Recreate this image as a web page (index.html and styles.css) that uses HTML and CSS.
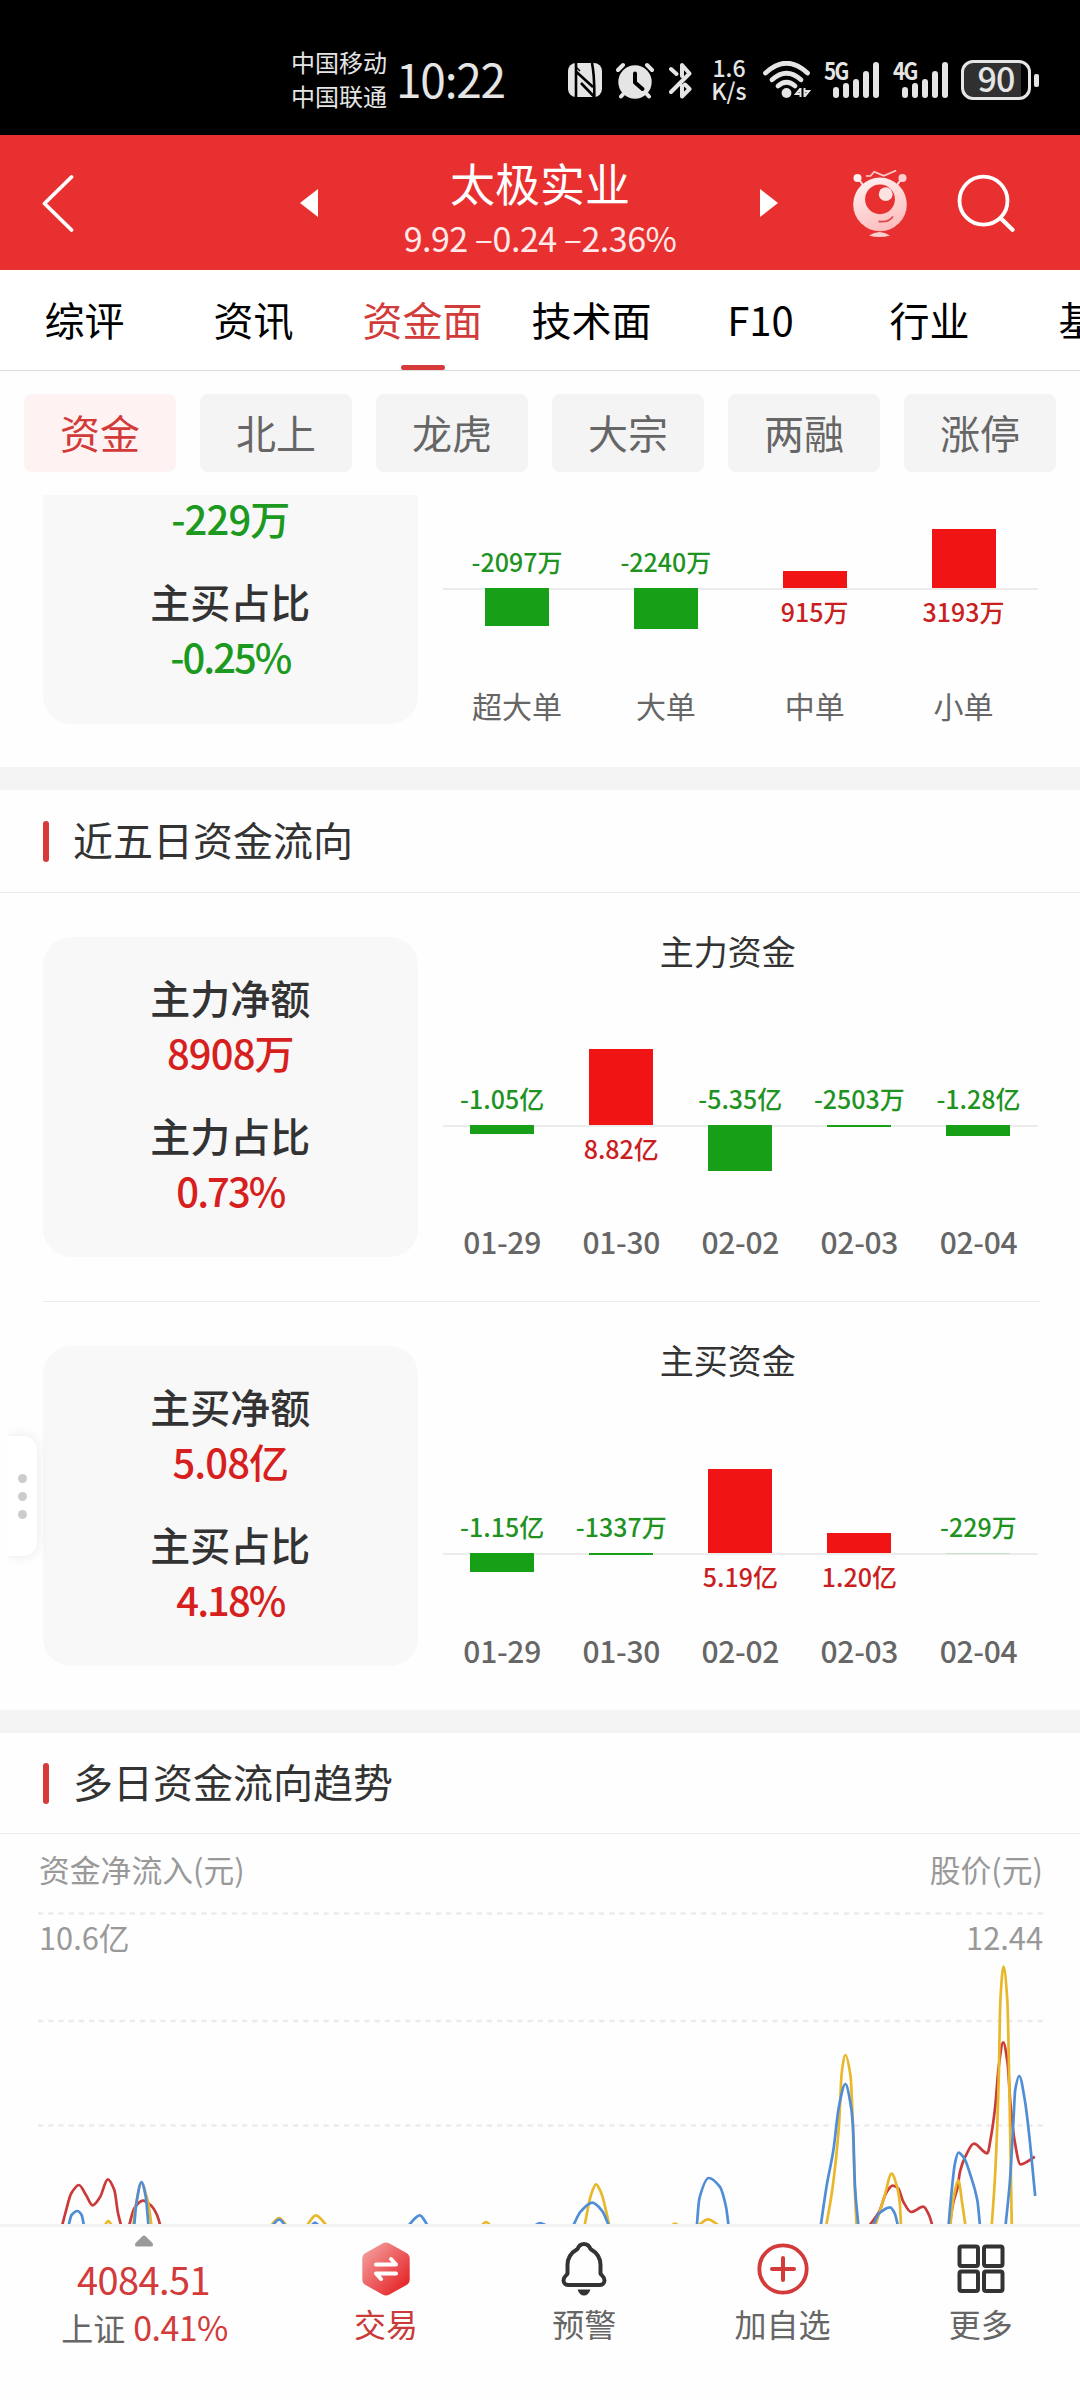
FILE: index.html
```html
<!DOCTYPE html>
<html lang="zh-CN">
<head>
<meta charset="utf-8">
<title>太极实业 - 资金面</title>
<link rel="stylesheet" href="styles.css">
</head>
<body>
<div class="screen">

  <div class="status">
    <div class="carriers"><span>中国移动</span><span>中国联通</span></div>
    <div class="clock">10:22</div>
    <svg class="st-nfc" width="34" height="34" viewBox="0 0 34 34">
      <rect width="34" height="34" rx="8" fill="#e5e5e5"/>
      <path d="M8 0 V34 M8.500 9 L25 24 M13 20 L25.500 33 M24 0 Q26.500 12 26.300 34" stroke="#000" stroke-width="2.600" fill="none"/>
      <path d="M8 0 V4 L12 8" stroke="#000" stroke-width="1.500" fill="none"/>
    </svg>
    <svg class="st-alarm" width="38" height="37" viewBox="0 0 38 37">
      <circle cx="19" cy="20" r="16.7" fill="#e5e5e5"/>
      <path d="M2 8 L7 3 M36 8 L31 3 M5 34.5 L9 30 M33 34.5 L29 30" stroke="#e5e5e5" stroke-width="4" stroke-linecap="round"/>
      <path d="M19 11.5 V20.5 L26.5 27" stroke="#000" stroke-width="4" fill="none" stroke-linecap="round" stroke-linejoin="round"/>
    </svg>
    <svg class="st-bt" width="23" height="37" viewBox="0 0 23 37">
      <path d="M2 7 L7.5 12 M2 30 L20.5 11.5 L13 3 V14 M13 24 V34.5 L20.5 27 L16 22.5" stroke="#e5e5e5" stroke-width="4" fill="none" stroke-linecap="round" stroke-linejoin="round"/>
    </svg>
    <div class="st-speed"><span>1.6</span><span>K/s</span></div>
    <svg class="st-wifi" width="48" height="38" viewBox="0 0 48 38">
      <g stroke="#e5e5e5" stroke-width="4.800" fill="none" stroke-linecap="round">
        <path d="M2.500 12 Q23.500 -7.500 44.500 12"/><path d="M9 18.800 Q23.500 5.500 38 18.800"/><path d="M15 25 Q23.500 17.500 32 25"/>
      </g>
      <circle cx="23.500" cy="32" r="4.900" fill="#e5e5e5"/>
      <path d="M37.500 27 V36 M41.500 27 V36 M37.500 27.500 L33 33 H37.500 M41.500 35.500 L46 30 H41.500" stroke="#e5e5e5" stroke-width="2" fill="none"/>
    </svg>
    <div class="signal">
      <span class="net">5G</span>
      <i class="s1"></i><i class="s2"></i><i class="s3"></i><i class="s4"></i><i class="s5"></i>
    </div>
    <div class="signal signal-2">
      <span class="net">4G</span>
      <i class="s1"></i><i class="s2"></i><i class="s3"></i><i class="s4"></i><i class="s5"></i>
    </div>
    <div class="battery"><span>90</span></div><i class="battery-tip"></i>
  </div>

  <header class="topbar">
    <svg class="back" width="32" height="58" viewBox="0 0 32 58"><path d="M29.500 3 L2.500 29.500 L29.500 56" stroke="#fff" stroke-width="3.800" fill="none" stroke-linecap="round" stroke-linejoin="round"/></svg>
    <svg width="18" height="28" viewBox="0 0 18 28"><path d="M0 14 L18 0 V28Z" fill="#fff"/></svg>
    <div class="stock">
      <h1>太极实业</h1>
      <p>9.92 –0.24 –2.36%</p>
    </div>
    <svg width="18" height="28" viewBox="0 0 18 28"><path d="M18 14 L0 0 V28Z" fill="#fff"/></svg>
    <div class="actions">
      <svg width="56" height="70" viewBox="851.500 167 56 70">
        <defs><linearGradient id="face" x1="0" y1="0" x2=".4" y2="1"><stop offset="0" stop-color="#fff4f4"/><stop offset="1" stop-color="#fdc0c0"/></linearGradient></defs>
        <path d="M857 176.500 L864 186 M902 176.500 L895 186" stroke="#fde0e0" stroke-width="2"/>
        <circle cx="857" cy="177" r="4" fill="#fff0f0"/><circle cx="902" cy="177" r="4" fill="#fbd0d0"/>
        <path d="M865.400 175 H870 L873.700 170.700 L883.300 174.800 L895.700 169.500" stroke="#fbd0d0" stroke-width="1.600" fill="none"/>
        <circle cx="879.500" cy="203.400" r="26.800" fill="url(#face)"/>
        <circle cx="879.500" cy="198.300" r="14.900" fill="#e83030"/>
        <circle cx="885.200" cy="193.200" r="6.900" fill="#fde2e2"/>
        <path d="M878 220.300 Q888 222 892.500 215.500" stroke="#e04848" stroke-width="1.800" fill="none"/>
        <path d="M868.500 234.500 Q879 227.500 889.500 234.500 Q879 237.500 868.500 234.500Z" fill="#fbd0d0"/>
      </svg>
      <svg width="58" height="60" viewBox="957 172 58 60"><circle cx="983.500" cy="199.700" r="24" stroke="#fff" stroke-width="3.800" fill="none"/><path d="M1001 217.500 L1012.500 228.700" stroke="#fff" stroke-width="4.200" stroke-linecap="round"/></svg>
    </div>
  </header>

  <nav class="tabs">
    <a>综评</a><a>资讯</a><a class="on">资金面</a><a>技术面</a><a>F10</a><a>行业</a><a>基金</a>
  </nav>

  <div class="chips">
    <a class="on">资金</a><a>北上</a><a>龙虎</a><a>大宗</a><a>两融</a><a>涨停</a>
  </div>

  <main class="scroller">
    <section class="flow flow-cut">
      <div class="card">
        <dl><dd class="down">-229万</dd></dl>
        <dl><dt>主买占比</dt><dd class="down pct">-0.25%</dd></dl>
      </div>
      <div class="chart chart-orders">
        <div class="plot">
          <div class="neg"><b>-2097万</b><i style="height:38px"></i></div>
          <div class="neg"><b>-2240万</b><i style="height:41px"></i></div>
          <div class="pos"><i style="height:17px"></i><b>915万</b></div>
          <div class="pos"><i style="height:59px"></i><b>3193万</b></div>
        </div>
        <div class="axis"><span>超大单</span><span>大单</span><span>中单</span><span>小单</span></div>
      </div>
    </section>

    <div class="band"></div>
    <h2 class="section-title first-title">近五日资金流向</h2>

    <section class="flow">
      <div class="card">
        <dl><dt>主力净额</dt><dd class="up">8908万</dd></dl>
        <dl><dt>主力占比</dt><dd class="up pct">0.73%</dd></dl>
      </div>
      <div class="chart chart-main">
        <h3>主力资金</h3>
        <div class="plot">
          <div class="neg"><b>-1.05亿</b><i style="height:9px"></i></div>
          <div class="pos"><i style="height:76px"></i><b>8.82亿</b></div>
          <div class="neg"><b>-5.35亿</b><i style="height:46px"></i></div>
          <div class="neg"><b>-2503万</b><i style="height:2px"></i></div>
          <div class="neg"><b>-1.28亿</b><i style="height:11px"></i></div>
        </div>
        <div class="axis dates"><span>01-29</span><span>01-30</span><span>02-02</span><span>02-03</span><span>02-04</span></div>
      </div>
    </section>
    <hr class="rule">
    <section class="flow">
      <div class="card">
        <dl><dt>主买净额</dt><dd class="up">5.08亿</dd></dl>
        <dl><dt>主买占比</dt><dd class="up pct">4.18%</dd></dl>
      </div>
      <div class="chart chart-buy">
        <h3>主买资金</h3>
        <div class="plot">
          <div class="neg"><b>-1.15亿</b><i style="height:19px"></i></div>
          <div class="neg"><b>-1337万</b><i style="height:2px"></i></div>
          <div class="pos"><i style="height:84px"></i><b>5.19亿</b></div>
          <div class="pos"><i style="height:20px"></i><b>1.20亿</b></div>
          <div class="neg"><b>-229万</b><i class="faint" style="height:1px"></i></div>
        </div>
        <div class="axis dates"><span>01-29</span><span>01-30</span><span>02-02</span><span>02-03</span><span>02-04</span></div>
      </div>
    </section>

    <div class="band"></div>
    <h2 class="section-title">多日资金流向趋势</h2>

    <section class="trend">
      <div class="trend-row"><span>资金净流入(元)</span><span>股价(元)</span></div>
      <div class="trend-plot">
        <svg id="trend" width="1080" height="314" viewBox="0 1910 1080 314">
          <path d="M38 1913.500 H1043 M38 2021 H1043 M38 2125.500 H1043" stroke="#ebebeb" stroke-width="2.400" stroke-dasharray="5.200 5"/>
        </svg>
        <div class="trend-row trend-values"><span>10.6亿</span><span>12.44</span></div>
      </div>
    </section>
    <div class="handle-clip"><div class="handle"><i></i><i></i><i></i></div></div>
  </main>

  <footer class="bottombar">
    <div class="index">
      <svg width="20" height="12" viewBox="0 0 20 12"><path d="M8.500 1.200 Q10 0 11.500 1.200 L18.500 8 Q20 11.500 17 11.500 H3 Q0 11.500 1.500 8Z" fill="#999"/></svg>
      <strong>4084.51</strong>
      <p>上证<em>0.41%</em></p>
    </div>
    <a class="nav-item hot">
      <svg width="54" height="54" viewBox="-27 -27 54 54">
        <defs><linearGradient id="hex" x1="0" y1="0" x2="1" y2="1"><stop offset=".1" stop-color="#f49a9a"/><stop offset=".85" stop-color="#e62a2d"/></linearGradient></defs>
        <path d="M-3.500 -25.500 Q0 -27.500 3.500 -25.500 L20.500 -16 Q23.700 -14 23.700 -10.500 V10.500 Q23.700 14 20.500 16 L3.500 25.500 Q0 27.500 -3.500 25.500 L-20.500 16 Q-23.700 14 -23.700 10.500 V-10.500 Q-23.700 -14 -20.500 -16Z" fill="url(#hex)"/>
        <path d="M-10 -4.500 H10 L5 -10 M10 4.500 H-10 L-5 10" stroke="#fff" stroke-width="4" fill="none" stroke-linecap="round" stroke-linejoin="round"/>
      </svg>
      <span>交易</span>
    </a>
    <a class="nav-item">
      <svg width="54" height="54" viewBox="-27 -27 54 54">
        <path d="M0 -25 C-4 -25 -5.500 -22.500 -6.500 -20 C-13.500 -16 -16.500 -10 -16.500 -4 V4.500 C-17 6.500 -20.500 7 -20.500 11.500 C-20.500 14.500 -18 16 -15.500 16 H15.500 C18 16 20.500 14.500 20.500 11.500 C20.500 7 17 6.500 16.500 4.500 V-4 C16.500 -10 13.500 -16 6.500 -20 C5.500 -22.500 4 -25 0 -25Z" stroke="#333" stroke-width="4" fill="none" stroke-linejoin="round"/>
        <path d="M-6.500 20.500 H6.500 Q4.500 26.500 0 26.500 Q-4.500 26.500 -6.500 20.500Z" fill="#333"/>
      </svg>
      <span>预警</span>
    </a>
    <a class="nav-item">
      <svg width="54" height="54" viewBox="-27 -27 54 54"><circle r="23.700" stroke="#d33a3a" stroke-width="3.800" fill="none"/><path d="M-11 0 H11 M0 -11 V11" stroke="#d33a3a" stroke-width="4" stroke-linecap="round"/></svg>
      <span>加自选</span>
    </a>
    <a class="nav-item">
      <svg width="54" height="54" viewBox="-27 -27 54 54"><g stroke="#333" stroke-width="4" fill="none"><rect x="-21.500" y="-22.500" width="18.500" height="19.500" rx="2"/><rect x="3" y="-22.500" width="18.500" height="19.500" rx="2"/><rect x="-21.500" y="2.500" width="18.500" height="19.500" rx="2"/><rect x="3" y="2.500" width="18.500" height="19.500" rx="2"/></g></svg>
      <span>更多</span>
    </a>
  </footer>
</div>
<script src="trend.js"></script>
</body>
</html>
```
FILE: styles.css
```css
* { box-sizing: border-box; margin: 0; padding: 0; }
body {
  width: 1080px;
  height: 2400px;
  overflow: hidden;
  background: #fefefe;
  font-family: "Noto Sans CJK SC", sans-serif;
  font-weight: 400;
  color: #333;
}
i, em { font-style: normal; }
svg { display: block; flex: none; }
.screen { display: flex; flex-direction: column; height: 2400px; overflow: hidden; }

/* status bar */
.status {
  flex: none;
  display: flex;
  align-items: center;
  height: 135px;
  padding: 25px 0 0 291px;
  background: #000;
  color: #e5e5e5;
}
.carriers { display: flex; flex-direction: column; width: 105px; font-size: 24px; line-height: 34px; white-space: nowrap; margin-top: -3px; }
.clock { width: 171px; font-size: 46px; line-height: 60px; letter-spacing: -1.200px; margin-top: -5px; white-space: nowrap; }
.st-nfc { margin: 0 14px 0 1px; }
.st-alarm { margin-right: 15px; }
.st-bt { margin-right: 19px; }
.st-speed { display: flex; flex-direction: column; align-items: center; width: 36px; margin: -2px 16px 0 0; font-size: 23px; line-height: 23px; font-weight: 500; }
.st-wifi { margin-right: 13px; }
.signal { position: relative; display: flex; align-items: flex-end; gap: 3.900px; width: 54px; height: 36px; padding-left: 9px; margin-right: 15px; flex: none; }
.signal .net { position: absolute; left: 0; top: -4px; font-size: 24px; line-height: 24px; font-weight: 700; letter-spacing: -2px; transform-origin: 0 0; transform: scaleX(.86); }
.signal i { width: 6px; border-radius: 3px; background: #e5e5e5; flex: none; }
.signal .s1 { height: 11px; } .signal .s2 { height: 15px; } .signal .s3 { height: 19px; } .signal .s4 { height: 27px; } .signal .s5 { height: 36px; }
.signal-2 { margin-right: 14px; }
.battery {
  flex: none;
  display: flex; align-items: center; justify-content: center;
  width: 70px; height: 40px;
  border: 3px solid #e5e5e5; border-radius: 12px;
  background: linear-gradient(90deg, #303030 57px, #000 57px);
  font-size: 34px; line-height: 34px; font-weight: 500; letter-spacing: -1px;
}
.battery span { margin-top: -4px; }
.battery-tip { width: 5px; height: 13px; margin-left: 3px; border-radius: 2px; background: #e5e5e5; }

/* header */
.topbar {
  flex: none;
  display: grid;
  grid-template-columns: 300px 18px 442px 18px 1fr;
  align-items: center;
  height: 135px;
  background: #e83030;
  color: #fff;
}
.back { margin-left: 42px; }
.stock { text-align: center; white-space: nowrap; padding: 14px 0 0 2px; }
.stock h1 { font-size: 45px; line-height: 56px; font-weight: 400; }
.stock p { font-size: 34px; line-height: 54px; letter-spacing: -.500px; color: #ffe9e9; }
.actions { display: flex; align-items: center; gap: 49px; padding-left: 74px; }

/* tabs */
.tabs { flex: none; display: flex; height: 101px; overflow: hidden; background: #fff; border-bottom: 1px solid #dcdcdc; }
.tabs a { flex: none; width: 169px; text-align: center; font-size: 40px; line-height: 98px; color: #000; white-space: nowrap; }
.tabs .on { color: #d33a3a; display: flex; flex-direction: column; align-items: center; }
.tabs .on::after { content: ""; width: 44px; height: 5px; margin-top: -3px; border-radius: 3px; background: #d63a3a; }

.chips { flex: none; display: flex; gap: 24px; height: 124px; padding: 23px 24px; }
.chips a { width: 152px; height: 78px; border-radius: 8px; background: #f4f4f4; color: #666; font-size: 40px; line-height: 76px; text-align: center; }
.chips .on { background: #fef3f2; color: #d33a3a; }

/* scrolling content */
.scroller { position: relative; flex: none; height: 1729px; overflow: hidden; }
.flow { display: flex; height: 408px; padding: 44px 42px 44px 43px; }
.card { width: 375px; height: 320px; padding-top: 33px; border-radius: 28px; background: #f8f8f8; text-align: center; }
.card dl { margin-bottom: 28px; font-size: 40px; line-height: 55px; font-weight: 500; }
.card dt { color: #333; }
.card dd { letter-spacing: -.900px; }
.card .pct { letter-spacing: -2px; }
.up { color: #d71f20; }
.down { color: #1c9a1f; }
.chart { display: flex; flex-direction: column; width: 621px; height: 320px; padding-left: 25px; }
.chart h3 { margin-left: -25px; text-align: center; font-size: 34px; line-height: 44px; height: 44px; margin-top: -8px; font-weight: 400; }
.plot { flex: none; display: grid; grid-auto-flow: column; grid-auto-columns: 1fr; height: var(--plot); }
.plot > div { display: flex; flex-direction: column; align-items: center; background: linear-gradient(#ececec, #ececec) 0 var(--base) / 100% 2px no-repeat; }
.plot i { display: block; flex: none; width: 64px; }
.plot b { font-size: 25px; line-height: 30px; font-weight: 500; white-space: nowrap; }
.neg b { color: #1f931f; margin-top: calc(var(--base) - 42px); }
.neg i { background: #17a017; margin-top: 12px; }
.neg .faint { background: #c4e2c4; }
.pos { padding-bottom: calc(var(--plot) - var(--base) - 38px); justify-content: flex-end; }
.pos b { color: #c9201f; margin-top: 8px; }
.pos i { background: #f01414; }
.chart-main { --plot: 232px; --base: 152px; }
.chart-buy { --plot: 232px; --base: 171px; }
.axis { display: grid; grid-auto-flow: column; grid-auto-columns: 1fr; text-align: center; font-size: 30px; line-height: 44px; color: #666; margin-top: 12px; }
.dates { font-weight: 500; letter-spacing: -.300px; margin-top: 14px; }

/* first block, its top already scrolled under the chips */
.flow-cut { height: 272px; padding-top: 0; }
.flow-cut .card { height: 229px; padding-top: 0; border-radius: 0 0 28px 28px; }
.flow-cut .card dl:first-child { margin-top: -4px; }
.flow-cut .chart { --plot: 176px; --base: 93px; height: 229px; }

.band { height: 23px; background: #f4f4f4; }
.section-title { display: flex; align-items: center; gap: 24px; height: 101px; padding: 0 0 5px 43px; border-bottom: 1px solid #ececec; font-size: 40px; line-height: 60px; font-weight: 400; color: #333; }
.section-title::before { content: ""; width: 6px; height: 41px; margin-top: 5px; border-radius: 3px; background: #d63a3a; }
.first-title { height: 103px; }
.rule { height: 1px; border: 0; margin: 0 40px 0 43px; background: #ececec; }

.trend-row { display: flex; justify-content: space-between; padding: 0 37px 0 39px; font-size: 30.800px; line-height: 44px; color: #999; }
.trend > .trend-row { height: 76px; padding-top: 13px; }
.trend-plot { display: grid; }
.trend-plot > * { grid-area: 1 / 1; }
.trend-values { align-self: start; padding-top: 5px; }

/* side handle floating over the page */
.handle-clip { position: absolute; left: 8px; top: 921px; width: 60px; height: 160px; overflow: hidden; }
.handle { display: flex; flex-direction: column; align-items: center; justify-content: center; gap: 9px; width: 29px; height: 120px; margin-top: 20px; border-radius: 0 14px 14px 0; background: #fff; box-shadow: 0 0 14px rgba(0,0,0,.09); }
.handle i { width: 9px; height: 9px; border-radius: 50%; background: #ccc; }

/* bottom bar */
.bottombar { flex: none; display: grid; grid-template-columns: 287px repeat(4, 198.250px); height: 176px; border-top: 3px solid #f3f3f3; background: #fefefe; }
.index { display: flex; flex-direction: column; align-items: center; padding-top: 8px; }
.index strong { font-size: 38px; line-height: 50px; font-weight: 400; color: #d33a3a; letter-spacing: -.600px; margin-top: 7px; }
.index p { display: flex; align-items: baseline; gap: 8px; font-size: 32px; line-height: 48px; color: #666; white-space: nowrap; margin-top: -1px; padding-left: 2px; }
.index em { font-size: 34px; letter-spacing: -.600px; color: #d33a3a; }
.nav-item { display: flex; flex-direction: column; align-items: center; padding-top: 15px; font-size: 32px; line-height: 46px; color: #666; }
.nav-item span { margin-top: 4px; }
.hot { color: #c93a38; }
```
FILE: trend.js
```js
// Curve segments of the three series, as x,y pairs in chart coordinates.
const series = [
  ["#c93a38", [
    [62,2226, 65.4,2213, 71.3,2193.3, 78.9,2185, 86,2195, 92.6,2205.3, 99.9,2197.3, 107.8,2179.3, 114.3,2190, 118,2213, 121.2,2226],
    [129,2226, 134.3,2208.3, 142.9,2200.7, 151.5,2206, 157,2215, 160.5,2226],
    [869,2226, 879.2,2211.7, 886,2193.3, 892.6,2185.7, 898.1,2188.3, 903.3,2201.7, 911.2,2212, 923.3,2206.7, 929,2215, 932.5,2226],
    [949.5,2226, 953.2,2203.3, 957.7,2186.7, 960,2171.7, 965.3,2156.7, 973.9,2143.7, 987.3,2153.3, 991,2136.7, 995.2,2106.7, 998.7,2066.7, 1003.2,2042.3, 1007.6,2063.3, 1010.4,2103.3, 1014.5,2140, 1020.4,2164.3, 1034.8,2156.7]
  ]],
  ["#e9b72a", [
    [104.5,2226, 108.3,2221, 112,2226],
    [133.2,2226, 136,2204, 141.3,2183, 147,2198, 149.5,2211, 151.5,2226],
    [270.5,2226, 279,2218, 287,2226],
    [306.5,2226, 315.8,2215.3, 327,2226],
    [481,2226, 486,2222, 491,2226],
    [584.5,2226, 591,2195, 596.1,2184.3, 601.3,2193.3, 609.5,2226],
    [671,2226, 675,2223.5, 679,2226],
    [697.5,2226, 708,2219.3, 719.5,2226],
    [826.2,2226, 832.7,2186.7, 838.9,2126.7, 841.7,2073.3, 845.4,2055, 850.6,2076.7, 852.7,2120, 854.7,2186.7, 856.6,2226],
    [875.2,2226, 884.4,2196.7, 891.6,2173.7, 897,2186.7, 899.8,2203.3, 901,2226],
    [950.3,2226, 953.2,2200, 958.4,2180.7, 962.2,2203.3, 965.5,2226],
    [991.7,2226, 995.2,2173.3, 998.7,2080, 1000.4,2000, 1003.5,1966.7, 1007.3,2000, 1009.7,2106.7, 1011.8,2226]
  ]],
  ["#4f8dd6", [
    [68.5,2226, 71.6,2215, 77.5,2211, 81.6,2215, 84,2226],
    [134.2,2226, 136.4,2203.3, 141.5,2182, 145.7,2196.7, 148.5,2226],
    [272,2226, 279.3,2219.5, 285.5,2226],
    [311,2226, 315,2222.5, 319,2226],
    [408,2226, 419.8,2215.3, 428,2226],
    [534,2226, 540,2223, 547,2226],
    [573,2226, 580.6,2211.7, 592.3,2202.7, 602,2210.7, 609,2226],
    [696.8,2226, 699.4,2198.3, 708.7,2178, 719.8,2186.7, 726,2206.7, 728.6,2226],
    [820.7,2226, 826.5,2186.7, 833.4,2150, 838.9,2106.7, 845.4,2084, 851,2106.7, 853,2126.7, 855,2186.7, 858.4,2226],
    [873,2226, 879.2,2213.3, 890.2,2207.3, 894.7,2213.3, 898,2226],
    [948.5,2226, 950.8,2200, 955,2163.3, 958.4,2152.7, 964.2,2158.3, 970.4,2175, 977.3,2200, 980,2226],
    [1005.5,2226, 1010,2180, 1013.5,2120, 1015.2,2090, 1019.3,2076, 1024.8,2100, 1029,2133.3, 1035.2,2196]
  ]]
];

// Monotone cubic interpolation: peaks stay flat and never overshoot.
function curve(flat) {
  const p = [];
  for (let i = 0; i < flat.length; i += 2) p.push([flat[i], flat[i + 1]]);
  const n = p.length;
  const s = p.slice(1).map((q, i) => (q[1] - p[i][1]) / (q[0] - p[i][0]));
  const t = p.map((q, i) => {
    if (i === 0) return s[0];
    if (i === n - 1) return s[n - 2];
    if (s[i - 1] * s[i] <= 0) return 0;
    return 2 * s[i - 1] * s[i] / (s[i - 1] + s[i]);
  });
  let d = "M" + p[0];
  for (let i = 1; i < n; i++) {
    const h = (p[i][0] - p[i - 1][0]) / 3;
    d += "C" + [p[i - 1][0] + h, p[i - 1][1] + t[i - 1] * h, p[i][0] - h, p[i][1] - t[i] * h, p[i][0], p[i][1]];
  }
  return d;
}

const svg = document.getElementById("trend");
for (const [color, parts] of series) {
  const path = document.createElementNS("http://www.w3.org/2000/svg", "path");
  path.setAttribute("d", parts.map(curve).join(""));
  path.setAttribute("stroke", color);
  path.setAttribute("stroke-width", "2.7");
  path.setAttribute("fill", "none");
  svg.appendChild(path);
}
```
